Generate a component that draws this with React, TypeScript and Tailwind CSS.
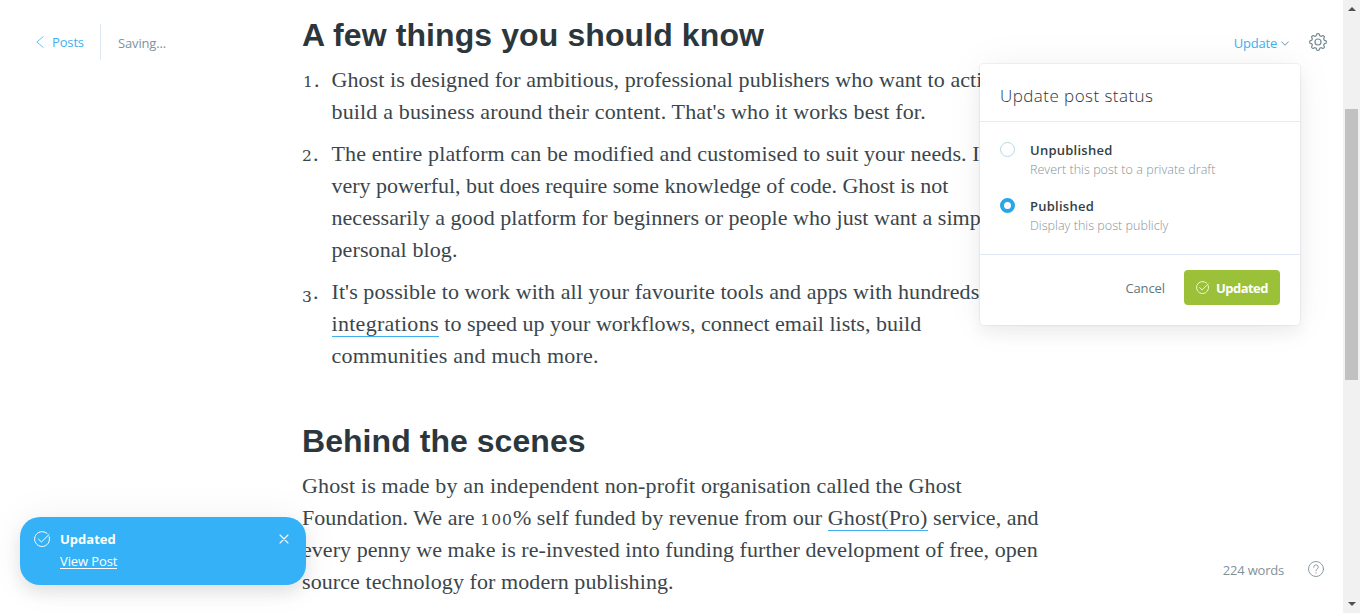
import type { ReactNode } from "react";

function Line({ children, className = "" }: { children: ReactNode; className?: string }) {
  return <span className={`block whitespace-nowrap ${className}`}>{children}</span>;
}

function CheckCircle({ className }: { className: string }) {
  return (
    <svg viewBox="0 0 24 24" fill="none" stroke="currentColor" strokeWidth="1.5" strokeLinecap="round" strokeLinejoin="round" className={className}>
      <path d="M22.8 8.600A11.200 11.200 0 1 1 19.600 3.700" />
      <path d="M6.800 12.300l4.300 4.200L22.500 5.400" />
    </svg>
  );
}

// Outline of an eight-lobed cog centred on (12, 12).
const gearPoints = Array.from({ length: 160 }, (_, i) => {
  const angle = (i / 160) * Math.PI * 2;
  const radius = 9.8 + 1.3 * Math.tanh(2.2 * Math.cos(8 * angle));
  return `${(12 + radius * Math.cos(angle)).toFixed(2)},${(12 + radius * Math.sin(angle)).toFixed(2)}`;
}).join(" ");

function Gear() {
  return (
    <svg viewBox="0 0 24 24" fill="none" stroke="currentColor" strokeWidth="1.6" strokeLinejoin="round" className="size-[18px]">
      <circle cx="12" cy="12" r="4" />
      <polygon points={gearPoints} />
    </svg>
  );
}

function ListNumber({ children, className = "" }: { children: ReactNode; className?: string }) {
  return (
    <span className="w-[29.500px] shrink-0">
      <span className={`font-['DejaVu_Serif',serif] text-[15.500px] leading-none ${className}`}>{children}</span>
      <span className="ml-px">.</span>
    </span>
  );
}

function Article() {
  return (
    <main className="w-[741px] shrink-0 pt-[12px] font-['Liberation_Serif',serif] text-[22px] leading-[32px] text-[#3a464c]">
      <h1 className="whitespace-nowrap font-['Liberation_Sans',sans-serif] text-[32px] font-bold leading-[47px] tracking-[0.1px] text-[#2b373d]">
        A few things you should know
      </h1>
      <ol className="mt-[5px] flex flex-col gap-[10px]">
        <li className="flex items-baseline">
          <ListNumber className="ml-px">1</ListNumber>
          <div>
            <Line className="tracking-[0.07px]">Ghost is designed for ambitious, professional publishers who want to actively</Line>
            <Line className="tracking-[0.16px]">build a business around their content. That's who it works best for.</Line>
          </div>
        </li>
        <li className="flex items-baseline">
          <ListNumber>2</ListNumber>
          <div>
            <Line className="tracking-[0.12px]">The entire platform can be modified and customised to suit your needs. It's</Line>
            <Line className="tracking-[-0.03px]">very powerful, but does require some knowledge of code. Ghost is not</Line>
            <Line className="tracking-[0.04px]">necessarily a good platform for beginners or people who just want a simple</Line>
            <Line className="tracking-[0.1px]">personal blog.</Line>
          </div>
        </li>
        <li className="flex items-baseline">
          <ListNumber className="align-[-3px]">3</ListNumber>
          <div>
            <Line className="tracking-[0.08px]">It's possible to work with all your favourite tools and apps with hundreds of</Line>
            <Line className="tracking-[0.005px]"><a className="inline-block h-[29px] border-b border-[#3eb0ef] tracking-[0.285px]">integrations</a> to speed up your workflows, connect email lists, build</Line>
            <Line className="tracking-[0.22px]">communities and much more.</Line>
          </div>
        </li>
      </ol>
      <h1 className="mt-[46px] whitespace-nowrap font-['Liberation_Sans',sans-serif] text-[32px] font-bold leading-[47px] tracking-[0.05px] text-[#2b373d]">
        Behind the scenes
      </h1>
      <p className="mt-[5px]">
        <Line className="tracking-[0.14px]">Ghost is made by an independent non-profit organisation called the Ghost</Line>
        <Line className="tracking-[0.04px]">Foundation. We are <span className="font-['DejaVu_Serif',serif] text-[15.500px] leading-none tracking-[1.05px]">100</span>% self funded by revenue from our <a className="inline-block h-[29px] border-b border-[#3eb0ef] tracking-[0.205px]">Ghost(Pro)</a> service, and</Line>
        <Line className="tracking-[0.055px]">every penny we make is re-invested into funding further development of free, open</Line>
        <Line className="tracking-[0.08px]">source technology for modern publishing.</Line>
      </p>
    </main>
  );
}

function StatusOption({ title, note, checked }: { title: string; note: string; checked?: boolean }) {
  return (
    <div className="flex h-[56px]">
      <span
        className={
          checked
            ? "mt-[6px] size-[15px] rounded-full border-4 border-[#2ba4e8] bg-white"
            : "mt-[6px] size-[15px] rounded-full border border-[#b9d8e6] bg-white"
        }
      />
      <div className="ml-[15px] whitespace-nowrap">
        <div className="text-[13px] font-semibold leading-[28px] tracking-[0.25px] text-[#343f44]">{title}</div>
        <div className="-mt-[2px] text-[12.5px] font-light leading-[16px] tracking-[0.04px] text-[#82949c]">{note}</div>
      </div>
    </div>
  );
}

function PublishMenu() {
  return (
    <section className="absolute left-[980px] top-[64px] h-[261px] w-[320px] rounded-[4px] bg-white shadow-[0_0_0_1px_rgba(99,114,130,0.08),0_8px_16px_rgba(27,39,51,0.06),0_0_40px_rgba(27,39,51,0.05)]">
      <h2 className="h-[58px] border-b border-[#e3edf3] pl-[20px] text-[17px] font-light leading-[63px] tracking-[0.45px] text-[#2b373d]">Update post status</h2>
      <div className="h-[133px] border-b border-[#dfe9f3] px-[20px] pt-[14px]">
        <StatusOption title="Unpublished" note="Revert this post to a private draft" />
        <StatusOption title="Published" note="Display this post publicly" checked />
      </div>
      <footer className="flex items-center justify-end gap-[19px] pr-[20px] pt-[15px]">
        <button className="pt-[2px] text-[13px] tracking-[-0.1px] text-[#627680]">Cancel</button>
        <button className="flex h-[35px] w-[96px] items-center rounded-[4px] bg-[#9bc139] pl-[12px] text-[13px] font-bold text-white">
          <CheckCircle className="mr-[7px] size-[13px]" />
          <span className="whitespace-nowrap pt-[2px] tracking-[-0.55px]">Updated</span>
        </button>
      </footer>
    </section>
  );
}

function Toast() {
  return (
    <aside className="absolute left-[20px] top-[517px] flex h-[68px] w-[286px] rounded-[20px] bg-[#35b1f8] pl-[14px] pr-[17px] pt-[14px] text-white shadow-[0_8px_16px_rgba(0,0,0,0.09),0_0_40px_rgba(0,0,0,0.06)]">
      <CheckCircle className="size-4 shrink-0" />
      <div className="ml-[10px] flex-1 text-[13px]">
        <div className="font-bold leading-[17px]">Updated</div>
        <a className="mt-[5px] inline-block h-[16px] border-b border-white leading-[16px] tracking-[-0.1px]">View Post</a>
      </div>
      <svg viewBox="0 0 10 10" className="mt-[3px] size-[10px]" stroke="currentColor" strokeWidth="1.1" strokeLinecap="round">
        <path d="M1 1l8 8M9 1L1 9" />
      </svg>
    </aside>
  );
}

export default function App() {
  return (
    <div className="relative flex h-[613px] w-[1360px] overflow-hidden bg-white font-['Open_Sans',sans-serif]">
      <nav className="flex h-[60px] w-[302px] shrink-0 pl-[36px] pt-[24px] text-[13px]">
        <a className="flex h-[36px] w-[65px] items-center border-r border-[#dfe9f3] text-[#3eb0ef]">
          <svg viewBox="0 0 8 12" className="mr-2 h-3 w-2" fill="none" stroke="currentColor" strokeWidth="0.8">
            <path d="M7.500.5L.8 6l6.700 5.500" />
          </svg>
          <span className="pt-[2px] tracking-[-0.15px]">Posts</span>
        </a>
        <span className="ml-[17px] leading-[38px] tracking-[-0.15px] text-[#7f929b]">Saving...</span>
      </nav>
      <Article />
      <div className="flex flex-1 flex-col justify-between">
        <div className="flex h-[60px] items-center justify-end pr-[16px] pt-[24px] text-[13px] text-[#3eb0ef]">
          <span className="pt-[4px] tracking-[-0.2px]">Update</span>
          <svg viewBox="0 0 8 5" className="ml-1 mr-[20px] mt-[3px] h-[5px] w-2 text-[#5b9dbc]" fill="none" stroke="currentColor">
            <path d="M.4.5L4 4.300 7.600.5" />
          </svg>
          <span className="text-[#738a94]"><Gear /></span>
        </div>
        <div className="mb-[34px] flex h-[20px] items-center justify-end gap-[24px] pr-[19px] text-[13px] text-[#7f929b]">
          <span className="pt-[4px] tracking-[-0.2px]">224 words</span>
          <svg viewBox="0 0 16 16" className="size-4" fill="none" stroke="currentColor" strokeWidth="0.9" strokeLinecap="round">
            <circle cx="8" cy="8" r="7.500" />
            <path d="M5.700 6.200a2.300 2.300 0 1 1 3.300 2c-.7.4-1 .7-1 1.600M8 11.700v.3" />
          </svg>
        </div>
      </div>
      <div className="flex h-full w-[17px] shrink-0 flex-col items-center justify-between bg-[#f1f1f1] py-[7px]">
        <svg viewBox="0 0 8 4" className="h-1 w-2 shrink-0 fill-[#505050]"><path d="M0 4l4-4 4 4z" /></svg>
        <div className="mb-[222px] mt-auto h-[271px] w-[13px] shrink-0 bg-[#c1c1c1]" />
        <svg viewBox="0 0 8 4" className="h-1 w-2 shrink-0 fill-[#505050]"><path d="M0 0l4 4 4-4z" /></svg>
      </div>
      <PublishMenu />
      <Toast />
    </div>
  );
}
